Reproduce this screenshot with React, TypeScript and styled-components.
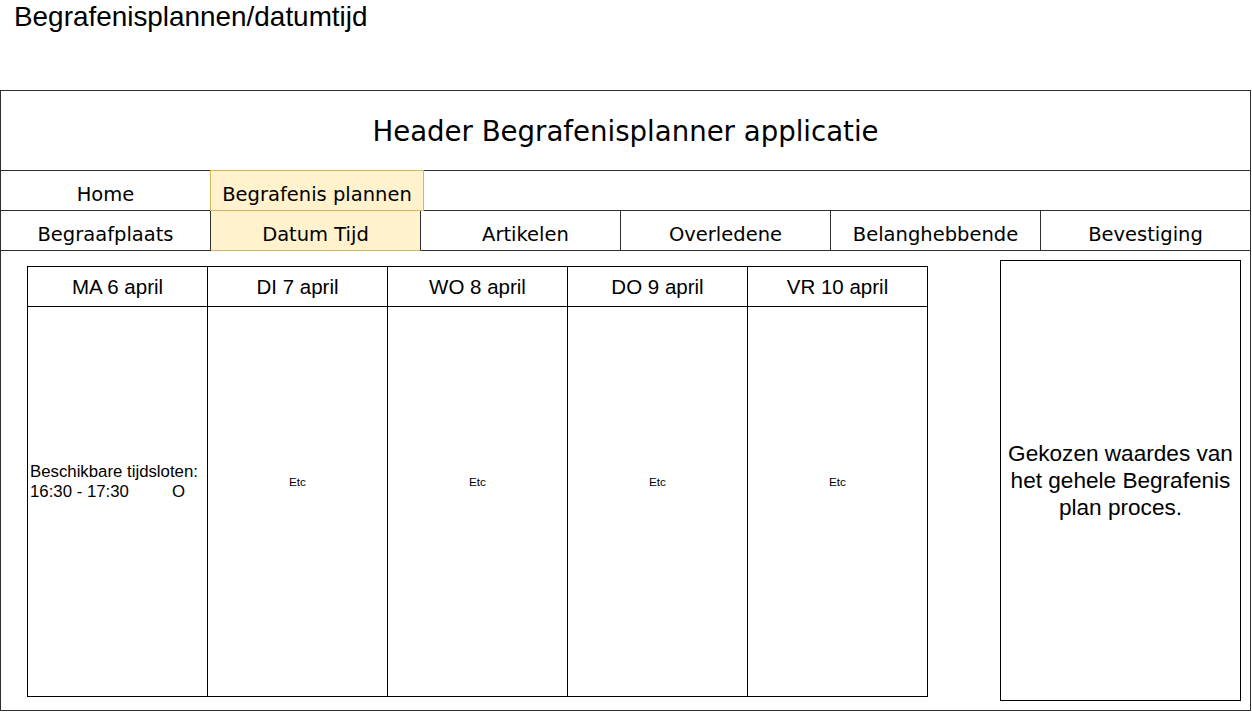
import React from "react";
import styled, { createGlobalStyle } from "styled-components";

const GlobalStyle = createGlobalStyle`
  html, body {
    margin: 0;
    padding: 0;
    background: #ffffff;
  }
  body {
    font-family: "Liberation Sans", Arial, sans-serif;
    color: #000;
  }
  * { box-sizing: border-box; }
`;

const SKETCH = "#2e2e2e";
const YELLOW = "#fff2cc";
const TAN = "#d6b656";

const Page = styled.div`
  width: 1252px;
  height: 712px;
  overflow: hidden;
  display: flex;
  flex-direction: column;
`;

const Title = styled.div`
  height: 90px;
  padding-left: 14px;
  font-family: "Liberation Sans", Arial, sans-serif;
  font-size: 27.9px;
  line-height: 33px;
  white-space: nowrap;
`;

const Frame = styled.div`
  width: 1251px;
  height: 621px;
  border: 1px solid ${SKETCH};
  display: flex;
  flex-direction: column;
`;

const Header = styled.div`
  height: 80px;
  flex: none;
  border-bottom: 1px solid ${SKETCH};
  display: flex;
  align-items: center;
  justify-content: center;
  padding-top: 2px;
  font-family: "DejaVu Sans", Verdana, sans-serif;
  font-size: 27.6px;
`;

const NavRow = styled.div`
  height: 40px;
  flex: none;
  display: flex;
`;

const NavCell = styled.div<{ $w?: number; $active?: boolean; $sep?: boolean; $shift?: number; $sides?: boolean }>`
  ${(p) => (p.$w ? `width: ${p.$w}px; flex: none;` : `flex: 1;`)}
  height: 40px;
  display: flex;
  align-items: center;
  justify-content: center;
  padding-top: 7px;
  padding-left: ${(p) => (p.$shift ?? 0) * 2}px;
  font-family: "DejaVu Sans", Verdana, sans-serif;
  font-size: 19.5px;
  white-space: nowrap;
  background: ${(p) => (p.$active ? YELLOW : "transparent")};
  border-bottom: 1px solid ${(p) => (p.$active ? TAN : SKETCH)};
  border-right: ${(p) => (p.$sep ? `1px solid ${SKETCH}` : "none")};
  ${(p) => (p.$sides ? `border-left: 1px solid ${TAN}; border-right: 1px solid ${TAN}; border-top: 1px solid ${TAN}; margin-top: -1px; height: 41px;` : "")}
`;

const Content = styled.div`
  flex: 1;
  display: flex;
  align-items: flex-start;
  padding-left: 26px;
  padding-right: 9px;
`;

const Calendar = styled.div`
  display: flex;
  margin-top: 15px;
`;

const DayColumn = styled.div<{ $first?: boolean }>`
  width: 181px;
  height: 431px;
  margin-left: ${(p) => (p.$first ? 0 : -1)}px;
  border: 1px solid #000;
  display: flex;
  flex-direction: column;
`;

const DayHeader = styled.div`
  height: 40px;
  flex: none;
  border-bottom: 1px solid #000;
  display: flex;
  align-items: center;
  justify-content: center;
  padding-top: 1px;
  font-size: 20.5px;
  white-space: nowrap;
`;

const DayBody = styled.div<{ $left?: boolean }>`
  flex: 1;
  display: flex;
  flex-direction: column;
  justify-content: center;
  align-items: ${(p) => (p.$left ? "flex-start" : "center")};
  padding-bottom: 40px;
  padding-left: ${(p) => (p.$left ? 2 : 0)}px;
`;

const SlotText = styled.div`
  font-size: 16.8px;
  line-height: 20px;
  white-space: nowrap;
`;

const SlotRow = styled.div`
  width: 155px;
  display: flex;
  justify-content: space-between;
  font-size: 16.8px;
  line-height: 20px;
  white-space: nowrap;
`;

const Etc = styled.div`
  font-size: 11.8px;
  line-height: 14px;
`;

const SummaryPanel = styled.div`
  margin-left: auto;
  margin-top: 9px;
  width: 241px;
  height: 441px;
  border: 1px solid #000;
  display: flex;
  align-items: center;
  justify-content: center;
  text-align: center;
  padding: 0 4px;
  font-size: 22.6px;
  line-height: 27px;
`;

const days = ["MA 6 april", "DI 7 april", "WO 8 april", "DO 9 april", "VR 10 april"];

const tabs: { label: string; w: number; active?: boolean; shift?: number }[] = [
  { label: "Begraafplaats", w: 210 },
  { label: "Datum Tijd", w: 210, active: true },
  { label: "Artikelen", w: 200, shift: 5 },
  { label: "Overledene", w: 210 },
  { label: "Belanghebbende", w: 210 },
  { label: "Bevestiging", w: 209 },
];

export default function App() {
  return (
    <Page>
      <GlobalStyle />
      <Title>Begrafenisplannen/datumtijd</Title>
      <Frame>
        <Header>Header Begrafenisplanner applicatie</Header>
        <NavRow>
          <NavCell $w={209}>Home</NavCell>
          <NavCell $w={214} $active $sides>
            Begrafenis plannen
          </NavCell>
          <NavCell />
        </NavRow>
        <NavRow>
          {tabs.map((t, i) => (
            <NavCell
              key={t.label}
              $w={t.w}
              $active={t.active}
              $sep={i < tabs.length - 1}
              $shift={t.shift}
            >
              {t.label}
            </NavCell>
          ))}
        </NavRow>
        <Content>
          <Calendar>
            {days.map((d, i) => (
              <DayColumn key={d} $first={i === 0}>
                <DayHeader>{d}</DayHeader>
                {i === 0 ? (
                  <DayBody $left>
                    <SlotText>Beschikbare tijdsloten:</SlotText>
                    <SlotRow>
                      <span>16:30 - 17:30</span>
                      <span>O</span>
                    </SlotRow>
                  </DayBody>
                ) : (
                  <DayBody>
                    <Etc>Etc</Etc>
                  </DayBody>
                )}
              </DayColumn>
            ))}
          </Calendar>
          <SummaryPanel>
            Gekozen waardes van het gehele Begrafenis plan proces.
          </SummaryPanel>
        </Content>
      </Frame>
    </Page>
  );
}
